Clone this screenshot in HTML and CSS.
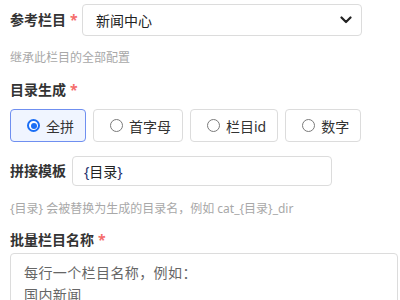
FILE: index.html
```html
<!DOCTYPE html>
<html lang="zh-CN">
<head>
<meta charset="utf-8">
<link rel="stylesheet" href="styles.css">
</head>
<body>
<div class="form">
  <div class="row row-ref">
    <label class="label w72">参考栏目<span class="req">*</span></label>
    <div class="select">
      <span>新闻中心</span>
      <svg class="chev" width="12" height="8" viewBox="0 0 12 8"><path d="M1.5 1.5 L6 6 L10.5 1.5" fill="none" stroke="#222" stroke-width="2.2" stroke-linecap="round" stroke-linejoin="round"/></svg>
    </div>
  </div>
  <div class="hint hint1">继承此栏目的全部配置</div>

  <div class="label block lab2">目录生成<span class="req">*</span></div>
  <div class="radios">
    <label class="radio active"><span class="dot on"></span><span>全拼</span></label>
    <label class="radio"><span class="dot"></span><span>首字母</span></label>
    <label class="radio"><span class="dot"></span><span>栏目id</span></label>
    <label class="radio"><span class="dot"></span><span>数字</span></label>
  </div>

  <div class="row row-tpl">
    <label class="label w62">拼接模板</label>
    <div class="input"><span class="br">{</span>目录<span class="br">}</span></div>
  </div>
  <div class="hint hint2">{目录} 会被替换为生成的目录名，例如 cat_{目录}_dir</div>

  <div class="label block lab3">批量栏目名称<span class="req">*</span></div>
  <div class="textarea">
    <div>每行一个栏目名称，例如：</div>
    <div>国内新闻</div>
  </div>
</div>
</body>
</html>
```
FILE: styles.css
```css
html, body {
  margin: 0;
  padding: 0;
  background: #fff;
  overflow: hidden;
}
body {
  font-family: "Noto Sans", "Noto Sans CJK SC", sans-serif;
  color: #333;
  font-size: 14px;
}
.form {
  padding: 0 0 0 10px;
}
.row {
  display: flex;
  align-items: center;
}
.row-ref {
  margin-top: 4px;
  height: 32px;
}
.label {
  font-weight: 700;
  color: #333;
  font-size: 14px;
  line-height: 20px;
}
.w72 { width: 72px; flex: none; }
.w62 { width: 62px; flex: none; }
.req {
  color: #f56c6c;
  margin-left: 4px;
  font-weight: 700;
}
.select {
  box-sizing: border-box;
  width: 280px;
  height: 32px;
  border: 1px solid #dcdcdc;
  border-radius: 4px;
  display: flex;
  align-items: center;
  justify-content: space-between;
  padding: 0 9px 0 13px;
  color: #222;
}
.hint {
  font-size: 12px;
  line-height: 18px;
  color: #a8a8a8;
}
.hint1 { margin-top: 13px; }
.block { display: block; }
.lab2 { margin-top: 13px; }
.radios {
  display: flex;
  gap: 7px;
  margin-top: 9px;
}
.radio {
  box-sizing: border-box;
  height: 33px;
  border: 1px solid #dcdcdc;
  border-radius: 4px;
  display: flex;
  align-items: center;
  gap: 6px;
  padding: 0 11px 0 16px;
  color: #333;
  background: #fff;
}
.radio.active {
  border-color: #6f8ff0;
  background: #f0f5ff;
}
.dot {
  box-sizing: border-box;
  width: 13px;
  height: 13px;
  border: 1px solid #7a7a7a;
  border-radius: 50%;
  background: #fff;
  flex: none;
  position: relative;
}
.dot.on {
  border: 2px solid #1a6ef5;
}
.dot.on::after {
  content: "";
  position: absolute;
  left: 1.5px;
  top: 1.5px;
  width: 6px;
  height: 6px;
  border-radius: 50%;
  background: #1a6ef5;
}
.row-tpl {
  margin-top: 14px;
  height: 30px;
}
.input {
  box-sizing: border-box;
  width: 260px;
  height: 30px;
  border: 1px solid #dcdcdc;
  border-radius: 4px;
  display: flex;
  align-items: center;
  padding-left: 11px;
  color: #222;
}
.br { color: #1b2d6b; }
.hint2 { margin-top: 14px; }
.lab3 { margin-top: 12px; }
.textarea {
  box-sizing: border-box;
  margin-top: 3px;
  width: 388px;
  height: 140px;
  border: 1px solid #dcdcdc;
  border-radius: 4px;
  padding: 8px 13px;
  color: #666;
  font-size: 14px;
  line-height: 22px;
  letter-spacing: 0.4px;
}
```
